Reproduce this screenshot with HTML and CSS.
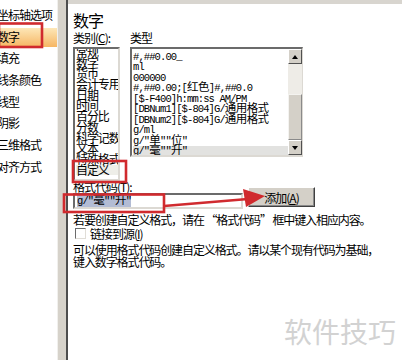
FILE: index.html
```html
<!DOCTYPE html>
<html lang="zh-CN">
<head>
    <meta charset="UTF-8">
    <title>设置坐标轴格式 - 数字</title>
    <link rel="stylesheet" href="styles.css">
</head>
<body>
    <div class="dialog">
        <ul class="nav">
            <li>坐标轴选项</li>
            <li class="active">数字</li>
            <li>填充</li>
            <li>线条颜色</li>
            <li>线型</li>
            <li>阴影</li>
            <li>三维格式</li>
            <li>对齐方式</li>
        </ul>
        <div class="splitter"></div>

        <div class="pane">
            <h1>数字</h1>

            <div class="pickers">
                <div class="cat-col">
                    <div class="label">类别(<u>C</u>):</div>
                    <ul class="listbox category">
                        <li>常规</li>
                        <li>数字</li>
                        <li>货币</li>
                        <li>会计专用</li>
                        <li>日期</li>
                        <li>时间</li>
                        <li>百分比</li>
                        <li>分数</li>
                        <li>科学记数</li>
                        <li>文本</li>
                        <li>特殊格式</li>
                        <li class="current">自定义</li>
                    </ul>
                </div>
                <div class="type-col">
                    <div class="label">类型</div>
                    <div class="listbox types">
                        <ul>
                            <li>#,##0.00_</li>
                            <li>ml</li>
                            <li>000000</li>
                            <li>#,##0.00;[<span class="cj">红色</span>]#,##0.0</li>
                            <li>[$-F400]h:mm:ss AM/PM</li>
                            <li>[DBNum1][$-804]G/<span class="cj">通用格式</span></li>
                            <li>[DBNum2][$-804]G/<span class="cj">通用格式</span></li>
                            <li>g/ml</li>
                            <li>g/"<span class="cj">单</span>""<span class="cj">位</span>"</li>
                            <li class="current">g/"<span class="cj">毫</span>""<span class="cj">升</span>"</li>
                        </ul>
                        <div class="scrollbar">
                            <div class="sb-btn"><span class="arrow-up"></span></div>
                            <div class="sb-track"><div class="sb-thumb"></div></div>
                            <div class="sb-btn"><span class="arrow-down"></span></div>
                        </div>
                    </div>
                </div>
            </div>

            <div class="code-row">
                <div class="code-field">
                    <div class="label">格式代码(<u>T</u>):</div>
                    <div class="input"><span class="sel">g/"<span class="cj">毫</span>""<span class="cj">升</span>"</span></div>
                </div>
                <button class="btn">添加(<u>A</u>)</button>
            </div>

            <p class="hint first">若要创建自定义格式，请在 “格式代码” 框中键入相应内容。</p>
            <label class="check"><span class="box"></span>链接到源(<u>I</u>)</label>
            <p class="hint second">可以使用格式代码创建自定义格式。请以某个现有代码为基础，<br>键入数字格式代码。</p>
        </div>
    </div>

    <div class="watermark">软件技巧</div>

    <!-- 红色标注框和箭头 -->
    <svg class="marks" width="402" height="360" viewBox="0 0 402 360">
        <g fill="none" stroke="#d02a2e" stroke-width="2.6">
            <rect x="-1" y="23.5" width="43" height="23.5"/>
            <rect x="73" y="161" width="53" height="21"/>
            <rect x="64" y="194.5" width="100" height="17.5"/>
            <line x1="164" y1="206" x2="248" y2="199"/>
        </g>
        <polygon points="265,196 243,189 246,207" fill="#d02a2e"/>
    </svg>
</body>
</html>
```

FILE: styles.css
```css
* {
    box-sizing: border-box;
}
html, body {
    margin: 0;
}
body {
    position: relative;
    width: 402px;
    height: 360px;
    overflow: hidden;
    background: #fff;
    color: #000;
    font-family: "Noto Sans CJK SC", sans-serif;
    font-size: 12px;
}
.dialog {
    display: flex;
    height: 360px;
}

/* 左侧导航 */
.nav {
    list-style: none;
    margin: 0 0 0 -3px;
    padding: 4px 0 0;
    width: 60px;
    flex: none;
}
.nav li {
    height: 21.7px;
    line-height: 21.7px;
    letter-spacing: -1px;
    white-space: nowrap;
}
.nav li.active {
    background: linear-gradient(#fde7b8, #f6b663) 0 2px / 100% 19px no-repeat;
}
.splitter {
    width: 11px;
    flex: none;
    background: #d6d2ca;
    border-left: 1px solid #f1f0ed;
    border-right: 2px solid #4d4d4d;
}

/* 右侧内容 */
.pane {
    flex: 1;
    border-top: 4px solid #d8d5cf;
    padding-left: 5px;
}
h1 {
    margin: 7px 0 0;
    font-size: 16px;
    font-weight: normal;
    line-height: 18px;
    letter-spacing: -1px;
}
.label {
    height: 14px;
    line-height: 14px;
    margin-bottom: 2px;
    letter-spacing: -1px;
    white-space: nowrap;
}
.pickers {
    display: flex;
    align-items: flex-start;
    gap: 10px;
    margin-top: 2px;
}
.cat-col {
    width: 47px;
}
.type-col {
    width: 173px;
}
.listbox {
    margin: 0;
    padding: 0;
    list-style: none;
    overflow: hidden;
    background: #fff;
    border: 2px solid;
    border-color: #6b6b6b #dcd9d3 #dcd9d3 #6b6b6b;
}
.category {
    height: 134px;
    padding-left: 1px;
    line-height: 10.7px;
    letter-spacing: -1.1px;
}
.category li {
    height: 10.7px;
    white-space: nowrap;
}
.category li:first-child {
    margin-top: -2px;
}
.category li.current {
    background: #eeeee8;
}
.types {
    display: flex;
    height: 110px;
    border-right-width: 1px;
}
.types ul {
    flex: 1;
    list-style: none;
    margin: 0;
    padding: 3px 0 0 1px;
    font-family: "Liberation Mono", "Noto Sans CJK SC", monospace;
    font-size: 10.5px;
    letter-spacing: -0.9px;
    line-height: 10.45px;
}
.types li {
    height: 10.45px;
    white-space: nowrap;
}
.types li.current {
    background: #e2e2e0;
}
.cj {
    font-family: "Noto Sans CJK SC", sans-serif;
    font-size: 11.5px;
    line-height: 0;
    letter-spacing: -0.6px;
}

/* 滚动条 */
.scrollbar {
    width: 14px;
    display: flex;
    flex-direction: column;
}
.sb-btn {
    height: 15px;
    display: flex;
    align-items: center;
    justify-content: center;
    background: #d4d0c8;
    border: 1px solid;
    border-color: #fff #505050 #505050 #fff;
}
.arrow-up, .arrow-down {
    width: 0;
    height: 0;
    border-left: 3.5px solid transparent;
    border-right: 3.5px solid transparent;
}
.arrow-up {
    border-bottom: 4px solid #000;
}
.arrow-down {
    border-top: 4px solid #000;
}
.sb-track {
    flex: 1;
    display: flex;
    flex-direction: column;
    justify-content: flex-end;
    background: #eeece7;
}
.sb-thumb {
    height: 46px;
    background: #d4d0c8;
    border: 1px solid;
    border-color: #f4f3f0 #8a8a8a #8a8a8a #f4f3f0;
}

/* 格式代码 */
.code-row {
    display: flex;
    align-items: flex-start;
}
.code-field {
    width: 170px;
}
.code-field .label {
    height: 12px;
    line-height: 12px;
    margin: 0;
}
.input {
    height: 16px;
    padding-left: 2px;
    border: 2px solid;
    border-color: #6b6b6b #dcd9d3 #dcd9d3 #6b6b6b;
    font-family: "Liberation Mono", "Noto Sans CJK SC", monospace;
    font-size: 10.5px;
    letter-spacing: -0.9px;
    line-height: 12px;
}
.sel {
    background: #b3bcd4;
}
.btn {
    width: 67px;
    height: 20px;
    margin: 6px 0 0 5px;
    padding: 0;
    background: #d4d0c8;
    border: 1px solid;
    border-color: #fff #404040 #404040 #fff;
    box-shadow: inset -1px -1px 0 #8a8a8a;
    font-family: "Noto Sans CJK SC", sans-serif;
    font-size: 12px;
    letter-spacing: -1px;
    color: #000;
}

.hint {
    margin: 0;
    line-height: 12px;
    letter-spacing: -1.1px;
    white-space: nowrap;
}
.hint.first {
    margin-top: 5px;
}
.hint.second {
    margin-top: 5px;
}
.check {
    display: flex;
    align-items: center;
    height: 12px;
    margin-top: 1px;
    letter-spacing: -1px;
}
.check .box {
    width: 11px;
    height: 11px;
    margin: 0 4px 0 2px;
    background: #fff;
    border: 1px solid;
    border-color: #6b6b6b #e0ddd7 #e0ddd7 #6b6b6b;
}

.watermark {
    position: absolute;
    left: 284px;
    top: 313px;
    font-size: 28px;
    line-height: 36px;
    color: #d2d2d2;
}
.marks {
    position: absolute;
    left: 0;
    top: 0;
    pointer-events: none;
}
```
